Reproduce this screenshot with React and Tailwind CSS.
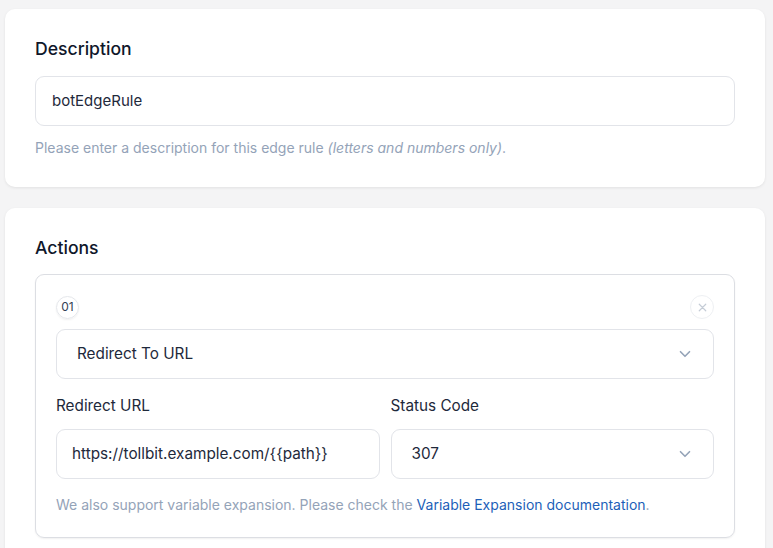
import React from "react";

function Card({ title, children }) {
  return (
    <div className="bg-white rounded-[10px] shadow-[0_1px_3px_rgba(0,0,0,0.08)] px-[30px] pt-[29px] pb-[29px]">
      <h2 className="text-[17.6px] font-medium text-[#0f172a] leading-[22px]">{title}</h2>
      {children}
    </div>
  );
}

function Chevron() {
  return (
    <svg width="18" height="18" viewBox="0 0 24 24" fill="none" stroke="#94a3b8" strokeWidth="2.2" strokeLinecap="round" strokeLinejoin="round">
      <path d="M6 9l6 6 6-6" />
    </svg>
  );
}

export default function App() {
  return (
    <div className="bg-[#f4f4f5] pl-[5px] pr-[8px] pt-[9px] flex flex-col gap-[21px] font-['Inter',sans-serif] overflow-hidden h-[548px] w-[773px]">
      <Card title="Description">
        <div className="mt-[16px] h-[50px] border border-[#e2e4e9] rounded-[9px] flex items-center px-[16px] text-[15px] text-[#1e293b]">
          botEdgeRule
        </div>
        <p className="mt-[11px] text-[14px] text-[#94a3b8]">
          Please enter a description for this edge rule <i>(letters and numbers only)</i>.
        </p>
      </Card>

      <Card title="Actions">
        <div className="mt-[15px] border border-[#dcdee3] rounded-[9px] shadow-[0_1px_2px_rgba(0,0,0,0.06)] px-[20px] pt-[20px] pb-[22px]">
          <div className="flex items-center justify-between">
            <div className="w-[23px] h-[23px] rounded-full border border-[#e5e7eb] shadow-[0_1px_2px_rgba(0,0,0,0.06)] flex items-center justify-center text-[12px] text-[#334155]">
              01
            </div>
            <div className="w-[24px] h-[24px] rounded-full border border-[#eef0f3] flex items-center justify-center">
              <svg width="13" height="13" viewBox="0 0 24 24" fill="none" stroke="#c5ccd6" strokeWidth="2.2" strokeLinecap="round">
                <path d="M6 6l12 12M18 6L6 18" />
              </svg>
            </div>
          </div>

          <div className="mt-[10px] h-[50px] border border-[#e2e4e9] rounded-[9px] flex items-center justify-between pl-[20px] pr-[19px] text-[15.3px] text-[#1e293b]">
            <span>Redirect To URL</span>
            <Chevron />
          </div>

          <div className="mt-[17px] grid grid-cols-2 gap-[11px]">
            <div>
              <div className="text-[15.3px] text-[#1e293b] leading-[20px]">Redirect URL</div>
              <div className="mt-[13px] h-[50px] border border-[#e2e4e9] rounded-[9px] flex items-center px-[15px] text-[15.3px] text-[#1e293b]">
                https://tollbit.example.com/{"{{path}}"}
              </div>
            </div>
            <div>
              <div className="text-[15.3px] text-[#1e293b] leading-[20px]">Status Code</div>
              <div className="mt-[13px] h-[50px] border border-[#e2e4e9] rounded-[9px] flex items-center justify-between pl-[20px] pr-[19px] text-[15.3px] text-[#1e293b]">
                <span>307</span>
                <Chevron />
              </div>
            </div>
          </div>

          <p className="mt-[15px] text-[14px] text-[#94a3b8]">
            We also support variable expansion. Please check the{" "}
            <span className="text-[#1d5fb8]">Variable Expansion documentation</span>.
          </p>
        </div>
      </Card>
    </div>
  );
}
